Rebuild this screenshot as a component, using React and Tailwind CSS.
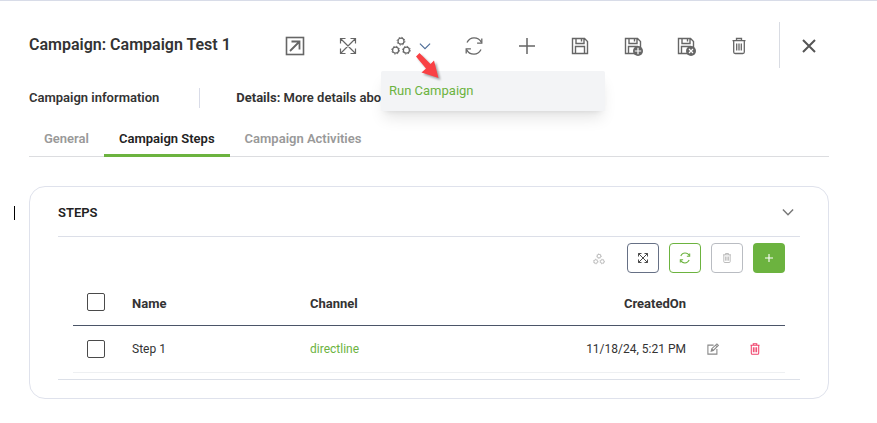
import { useState } from "react";

const TABS = ["General", "Campaign Steps", "Campaign Activities"];

const STEPS = [{ id: 1, name: "Step 1", channel: "directline", createdOn: "11/18/24, 5:21 PM" }];

function Icon({ className = "size-5", width = 1.3, children }) {
  return (
    <svg
      aria-hidden="true"
      className={`${className} shrink-0`}
      fill="none"
      stroke="currentColor"
      strokeWidth={width}
      viewBox="0 0 20 20"
    >
      {children}
    </svg>
  );
}

function OpenIcon() {
  return (
    <Icon width={1.6}>
      <rect height="17" width="17" x="1.5" y="1.5" />
      <path d="M5 15 14 6M6.5 5.5h8v8" strokeWidth="1.8" />
    </Icon>
  );
}

function ExpandIcon({ className, width }) {
  return (
    <Icon className={className} width={width}>
      <path d="M2.5 2.5l15 15M17.5 2.5l-15 15M2.5 7.5v-5h5M12.5 2.5h5v5M17.5 12.5v5h-5M7.5 17.5h-5v-5" />
    </Icon>
  );
}

function GearsIcon({ className }) {
  const gears = [
    [10, 5.2],
    [4.6, 14.2],
    [15.4, 14.2]
  ];
  return (
    <Icon className={className} width={1.2}>
      {gears.map(([cx, cy]) => (
        <g key={cx}>
          <circle cx={cx} cy={cy} r="3" />
          <circle cx={cx} cy={cy} r="3.9" strokeDasharray="1.4 1.66" strokeWidth="1" />
        </g>
      ))}
    </Icon>
  );
}

function RefreshIcon({ className, width }) {
  return (
    <Icon className={className} width={width}>
      <path d="M3 6.500C4.500 3.600 7 1.800 10 1.800c3.200 0 6 1.700 7.300 4.500M17 13.500C15.500 16.400 13 18.200 10 18.200c-3.200 0-6-1.700-7.300-4.500" />
      <path d="M17.800 2.500v4.700h-4.700M2.200 17.500v-4.700h4.700" />
    </Icon>
  );
}

function PlusIcon({ className, width = 1.5 }) {
  return (
    <Icon className={className} width={width}>
      <path d="M10 2v16M2 10h16" />
    </Icon>
  );
}

function SaveIcon({ badge }) {
  return (
    <Icon width={1.4}>
      <path d="M2.500 2.500h12l3 3v12h-15zM6 2.500v5h8v-5M11.500 3v2.500M5.500 17.500v-7h9v7" />
      {badge ? (
        <g>
          <circle cx="15" cy="15" fill="currentColor" r="5" stroke="none" />
          <path
            d={badge === "plus" ? "M15 11.800v6.400M11.800 15h6.400" : "M13 13l4 4M17 13l-4 4"}
            stroke="white"
            strokeWidth="1.200"
          />
        </g>
      ) : null}
    </Icon>
  );
}

function TrashIcon({ className, width = 1.3 }) {
  return (
    <Icon className={className} width={width}>
      <path d="M3.500 4.700h13M7.500 4.500v-2h5v2M4.700 4.700v11.300q0 1.500 1.500 1.500h7.600q1.500 0 1.500-1.500V4.700M7.700 7.500v7M10 7.500v7M12.300 7.500v7" />
    </Icon>
  );
}

function EditIcon() {
  return (
    <Icon className="size-3" width={1.8}>
      <path d="M11 3.500H1.500v15h15V10M7 13.500l1-4 8.500-8 2.500 2.500-8.500 8.500zM14 3.500l2.500 2.500M8 10l2.500 2.500" />
    </Icon>
  );
}

function ChevronIcon({ className, width = 1.8 }) {
  return (
    <Icon className={className} width={width}>
      <path d="M1.500 6 10 14.500 18.500 6" />
    </Icon>
  );
}

function ToolButton({ label, children }) {
  return (
    <button
      aria-label={label}
      className="flex h-10 w-[53px] items-center justify-center hover:text-black"
      title={label}
      type="button"
    >
      {children}
    </button>
  );
}

function Checkbox({ label }) {
  return (
    <input
      aria-label={label}
      className="block size-[18px] appearance-none rounded-xs border border-[#4a4a4a] bg-white checked:bg-[#6cb33f]"
      type="checkbox"
    />
  );
}

function CampaignHeader() {
  return (
    <header className="flex h-[46px] items-center">
      <h1 className="flex-1 text-base font-semibold whitespace-nowrap text-[#333]">Campaign: Campaign Test 1</h1>
      <div className="flex items-center pt-0.5 text-[#666]">
        <ToolButton label="Open in new window">
          <OpenIcon />
        </ToolButton>
        <ToolButton label="Expand">
          <ExpandIcon width={1.2} />
        </ToolButton>
        <div className="relative">
          <button
            aria-expanded="true"
            aria-label="Actions"
            className="flex h-10 w-[73px] items-center gap-2 pl-[17px]"
            type="button"
          >
            <GearsIcon />
            <ChevronIcon className="size-3 text-[#4a6a96]" />
          </button>
          <ul className="absolute top-[45px] left-[7px] z-10 w-56 rounded-xs bg-[#f3f4f6] shadow-lg" role="menu">
            <li role="none">
              <button
                className="h-10 w-full px-2 text-left text-[13px] text-[#6cb33f]"
                role="menuitem"
                type="button"
              >
                Run Campaign
              </button>
            </li>
          </ul>
          <svg
            aria-hidden="true"
            className="absolute top-[26px] left-[41px] z-20 h-7 w-7 drop-shadow-[2px_2px_1px_rgba(0,0,0,0.35)]"
            viewBox="0 0 28 28"
          >
            <path d="M4.500 1 15.500 12 19 8.500 23.500 26 6.500 20.500 11 16.500 1 4.500z" fill="#f94144" />
          </svg>
        </div>
        <ToolButton label="Refresh">
          <RefreshIcon />
        </ToolButton>
        <ToolButton label="New">
          <PlusIcon />
        </ToolButton>
        <ToolButton label="Save">
          <SaveIcon />
        </ToolButton>
        <ToolButton label="Save and new">
          <SaveIcon badge="plus" />
        </ToolButton>
        <ToolButton label="Save and close">
          <SaveIcon badge="close" />
        </ToolButton>
        <ToolButton label="Delete">
          <TrashIcon />
        </ToolButton>
      </div>
      <div className="ml-3.5 flex h-full items-center border-l border-[#d9dce3] pt-0.5 pl-2 text-[#555]">
        <button aria-label="Close" className="flex h-10 w-[41px] items-center justify-center" type="button">
          <Icon width={2}>
            <path d="M4 4l12 12M16 4 4 16" />
          </Icon>
        </button>
      </div>
    </header>
  );
}

function StepsTable() {
  return (
    <table className="mt-[7px] w-full table-fixed text-left text-[#333]">
      <thead>
        <tr className="h-[45px] border-b border-[#4b5568] text-[13px]">
          <th className="w-[59px] pl-3.5">
            <Checkbox label="Select all" />
          </th>
          <th className="w-1/4 pt-0.5 font-bold">Name</th>
          <th className="pt-0.5 font-bold">Channel</th>
          <th className="pt-0.5 text-right font-bold">CreatedOn</th>
          <th aria-label="Edit" className="w-[54px]" />
          <th aria-label="Delete" className="w-[45px]" />
        </tr>
      </thead>
      <tbody>
        {STEPS.map((step) => (
          <tr className="h-[47px] border-b border-[#eef0f2] text-xs" key={step.id}>
            <td className="pl-3.5">
              <Checkbox label={`Select ${step.name}`} />
            </td>
            <td>{step.name}</td>
            <td className="text-[#6cb33f]">{step.channel}</td>
            <td className="text-right whitespace-nowrap">{step.createdOn}</td>
            <td>
              <button aria-label={`Edit ${step.name}`} className="mx-auto block text-[#888]" type="button">
                <EditIcon />
              </button>
            </td>
            <td>
              <button aria-label={`Delete ${step.name}`} className="ml-2 block text-[#f0426b]" type="button">
                <TrashIcon className="size-3.5" width={1.5} />
              </button>
            </td>
          </tr>
        ))}
      </tbody>
    </table>
  );
}

export default function App() {
  const [activeTab, setActiveTab] = useState("Campaign Steps");
  const [open, setOpen] = useState(true);

  return (
    <main className="min-h-screen border-t border-[#d8dce8] bg-white pt-[21px] pr-12 pb-6 pl-[29px] font-[Roboto,sans-serif]">
      <CampaignHeader />

      <div className="mt-5 flex h-5 items-center text-[13px] font-semibold text-[#333]">
        <p className="mr-9 border-r border-[#d9dce8] pr-10 whitespace-nowrap">Campaign information</p>
        <p className="whitespace-nowrap">
          <span className="font-bold">Details:</span> More details about
        </p>
      </div>

      <nav className="mt-3 flex h-[37px] border-b border-[#dcdde0]" role="tablist">
        {TABS.map((tab) => (
          <button
            aria-selected={tab === activeTab}
            className={`-mb-px border-b-3 px-[15px] pt-1 text-[13px] font-semibold whitespace-nowrap ${
              tab === activeTab ? "border-[#6cb33f] text-[#222]" : "border-transparent text-[#999]"
            }`}
            key={tab}
            onClick={() => setActiveTab(tab)}
            role="tab"
            type="button"
          >
            {tab}
          </button>
        ))}
      </nav>

      <section className="relative mt-[29px] rounded-2xl border border-[#dfe2ec] px-7 pb-[18px]">
        {/* text caret in the page margin */}
        <span aria-hidden="true" className="absolute top-[19px] -left-4 h-3.5 w-px bg-black" />
        <div className="flex h-[50px] items-center justify-between border-b border-[#dcdfe8]">
          <h2 className="pt-0.5 text-[13px] font-semibold text-[#222]">STEPS</h2>
          <button
            aria-expanded={open}
            aria-label="Toggle steps"
            className="mr-1.5 text-[#777]"
            onClick={() => setOpen(!open)}
            type="button"
          >
            <ChevronIcon className="size-3" width={2.4} />
          </button>
        </div>

        {open ? (
          <div className="border-b border-[#dce0e8] px-[15px] pt-1.5 pb-1.5">
            <div className="flex h-[30px] items-center justify-end gap-2.5">
              <button aria-label="Run" className="mr-3 pt-0.5 text-[#aaa]" disabled type="button">
                <GearsIcon className="size-3" />
              </button>
              <button
                aria-label="Expand"
                className="flex h-full w-8 items-center justify-center rounded border border-[#667085] text-[#444]"
                type="button"
              >
                <ExpandIcon className="size-3" width={1.6} />
              </button>
              <button
                aria-label="Refresh"
                className="flex h-full w-8 items-center justify-center rounded border border-[#6cb33f] text-[#6cb33f]"
                type="button"
              >
                <RefreshIcon className="size-3" width={1.8} />
              </button>
              <button
                aria-label="Delete"
                className="flex h-full w-8 items-center justify-center rounded border border-[#b9bcc2] text-[#b4b4b4]"
                disabled
                type="button"
              >
                <TrashIcon className="size-3" width={1.5} />
              </button>
              <button
                aria-label="Add step"
                className="flex h-full w-8 items-center justify-center rounded bg-[#6cb33f] text-white"
                type="button"
              >
                <PlusIcon className="size-2.5" width={2.2} />
              </button>
            </div>
            <StepsTable />
          </div>
        ) : null}
      </section>
    </main>
  );
}
